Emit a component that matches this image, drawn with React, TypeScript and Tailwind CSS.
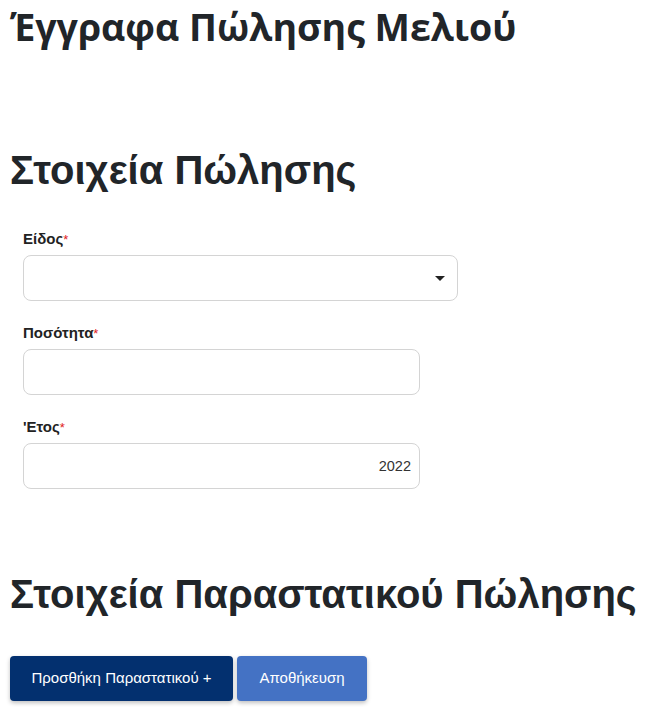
const label = "block text-[15px] leading-[18px] font-bold text-[#222] font-['Liberation_Sans',Arial,sans-serif]";
const input = "h-[46px] rounded-lg border border-[#d4d4d4] bg-white px-[8px] text-right text-[14.5px] text-[#333] font-['Liberation_Sans',Arial,sans-serif] outline-none";

function Field({ name, wide, value, select }: { name: string; wide?: boolean; value?: string; select?: boolean }) {
  return (
    <div className="flex flex-col gap-[6px]">
      <label className={label}>
        {name}
        <span className="text-[13px] font-normal text-[#e02020]">*</span>
      </label>
      {select ? (
        <div className={"flex items-center justify-end pr-[12px] " + input + (wide ? " w-[435px]" : " w-[397px]")}>
          <span className="block h-0 w-0 border-x-[5px] border-t-[5px] border-x-transparent border-t-[#222]" />
        </div>
      ) : (
        <input readOnly value={value ?? ""} className={input + " w-[397px]"} />
      )}
    </div>
  );
}

export default function App() {
  return (
    <div className="min-h-[707px] bg-white px-[10px] text-[#212529]">
      <h1 className="whitespace-nowrap pt-[2px] font-['Open_Sans',sans-serif] text-[37.5px] font-bold leading-[50px]">Έγγραφα Πώλησης Μελιού</h1>

      <h2 className="mt-[94px] whitespace-nowrap font-['Liberation_Sans',Arial,sans-serif] text-[40px] font-bold leading-[48px]">Στοιχεία Πώλησης</h2>

      <div className="mt-[36px] flex flex-col gap-[23px] pl-[13px]">
        <Field name="Είδος" select wide />
        <Field name="Ποσότητα" />
        <Field name="'Ετος" value="2022" />
      </div>

      <h2 className="mt-[81px] whitespace-nowrap font-['Liberation_Sans',Arial,sans-serif] text-[40px] font-bold leading-[48px]">Στοιχεία Παραστατικού Πώλησης</h2>

      <div className="mt-[38px] flex gap-[4px] font-['Liberation_Sans',Arial,sans-serif] text-[15px] text-white">
        <button className="h-[45px] w-[223px] rounded-[4px] bg-[#03306f] shadow-[0_2px_4px_rgba(0,0,0,0.25)]">Προσθήκη Παραστατικού +</button>
        <button className="h-[45px] w-[130px] rounded-[4px] bg-[#4472c4] shadow-[0_2px_4px_rgba(0,0,0,0.25)]">Αποθήκευση</button>
      </div>
    </div>
  );
}
